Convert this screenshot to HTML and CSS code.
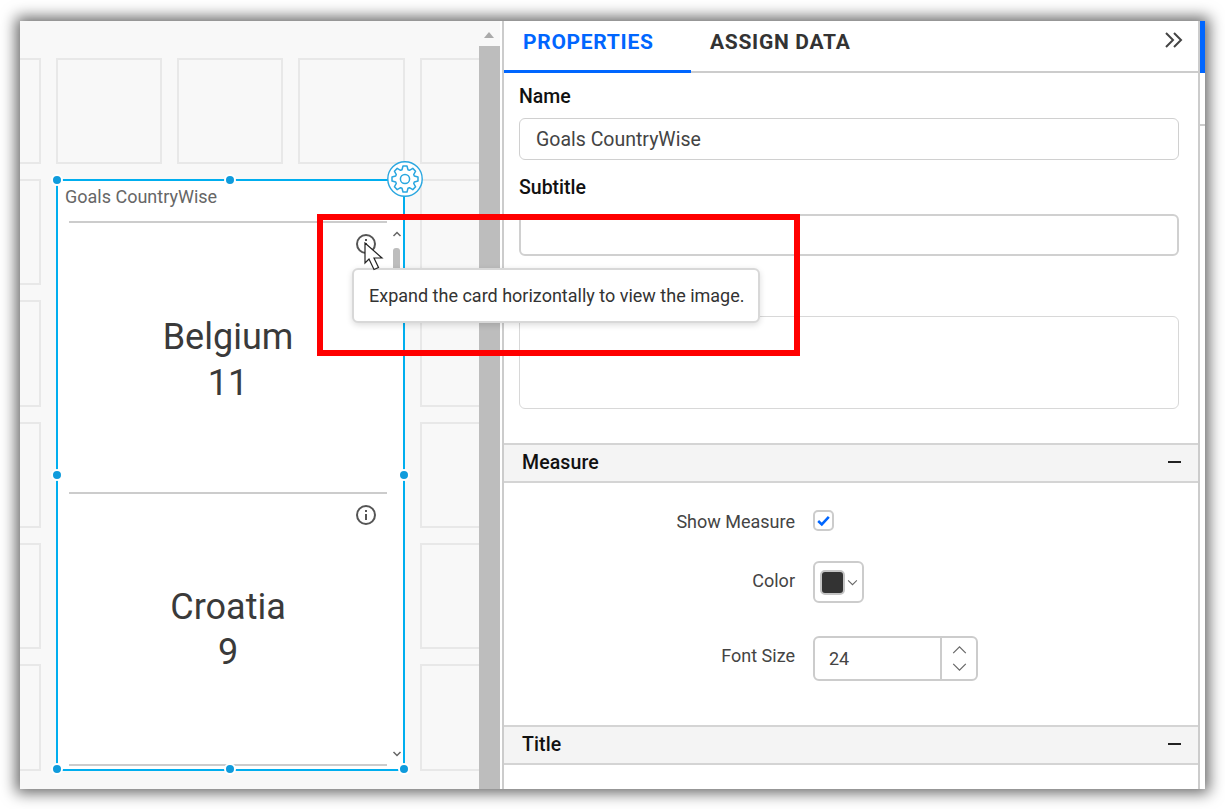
FILE: index.html
```html
<!DOCTYPE html>
<html lang="en">
<head>
<meta charset="utf-8">
<title>Card properties</title>
<link rel="stylesheet" href="styles.css">
</head>
<body>
<div class="window">
  <section class="canvas">
    <div class="tiles">
      <i></i><i></i><i></i><i></i><i></i>
      <i></i><i></i><i></i><i></i><i></i>
      <i></i><i></i><i></i><i></i><i></i>
      <i></i><i></i><i></i><i></i><i></i>
      <i></i><i></i><i></i><i></i><i></i>
      <i></i><i></i><i></i><i></i><i></i>
    </div>
    <div class="widget">
      <div class="widget-title">Goals CountryWise</div>
      <div class="card-list">
        <div class="card">
          <svg class="info" viewBox="0 0 22 22"><circle cx="11" cy="11" r="9" /><path d="M11 10v6M11 6v2" /></svg>
          <div class="card-text">Belgium<br>11</div>
        </div>
        <div class="card second">
          <svg class="info" viewBox="0 0 22 22"><circle cx="11" cy="11" r="9" /><path d="M11 10v6M11 6v2" /></svg>
          <div class="card-text">Croatia<br>9</div>
        </div>
      </div>
      <div class="mini-scroll">
        <svg class="mini-arrow" viewBox="0 0 10 6"><path d="M1.5 5L5 1.5 8.5 5" /></svg>
        <span class="mini-thumb"></span>
        <svg class="mini-arrow bottom" viewBox="0 0 10 6"><path d="M1.5 1L5 4.5 8.5 1" /></svg>
      </div>
      <span class="handle h-tl"></span><span class="handle h-tc"></span>
      <span class="handle h-ml"></span><span class="handle h-mr"></span>
      <span class="handle h-bl"></span><span class="handle h-bc"></span><span class="handle h-br"></span>
      <div class="gear">
        <svg viewBox="0 0 36 36">
          <circle class="gear-ring" cx="18" cy="18" r="17.2" />
          <path class="gear-cog" d="M15 8.7L16 5H20L21 8.7 22.45 9.3 25.78 7.39 28.61 10.22 26.7 13.55 27.3 15 31 16V20L27.3 21 26.7 22.45 28.61 25.78 25.78 28.61 22.45 26.7 21 27.3 20 31H16L15 27.3 13.55 26.7 10.22 28.61 7.39 25.78 9.3 22.45 8.7 21 5 20V16L8.7 15 9.3 13.55 7.39 10.22 10.22 7.39 13.55 9.3Z" />
          <circle class="gear-cog" cx="18" cy="18" r="4.6" />
        </svg>
      </div>
    </div>
  </section>

  <div class="vscroll">
    <svg class="vscroll-arrow" viewBox="0 0 12 8"><path d="M6 1l5 6H1z" /></svg>
    <div class="vscroll-thumb"></div>
  </div>

  <aside class="panel">
    <nav class="tabs">
      <span class="tab active">PROPERTIES</span>
      <span class="tab">ASSIGN DATA</span>
      <svg class="collapse" viewBox="0 0 20 16"><path d="M2 1l7 7-7 7M10 1l7 7-7 7" /></svg>
    </nav>
    <div class="general">
      <label class="field-label">Name</label>
      <div class="input">Goals CountryWise</div>
      <label class="field-label subtitle">Subtitle</label>
      <div class="input thick"></div>
      <div class="textarea"></div>
    </div>
    <div class="section-head"><span>Measure</span><b class="minus"></b></div>
    <div class="rows">
      <div class="row r-show">
        <span class="row-label">Show Measure</span>
        <span class="check"><svg viewBox="0 0 16 16"><path d="M3 8.5l3.4 3.2L13 4.6" /></svg></span>
      </div>
      <div class="row r-color">
        <span class="row-label">Color</span>
        <span class="color-pick"><span class="swatch"></span><svg viewBox="0 0 12 8"><path d="M1 1.5l5 5 5-5" /></svg></span>
      </div>
      <div class="row r-size">
        <span class="row-label">Font Size</span>
        <span class="spinner">
          <span class="spin-value">24</span>
          <span class="spin-btns">
            <svg viewBox="0 0 18 10"><path d="M2 9l7-7 7 7" /></svg>
            <svg viewBox="0 0 18 10"><path d="M2 1l7 7 7-7" /></svg>
          </span>
        </span>
      </div>
    </div>
    <div class="section-head title-head"><span>Title</span><b class="minus"></b></div>
  </aside>

  <div class="edge">
    <div class="edge-thumb"></div>
    <div class="edge-line"></div>
  </div>

  <div class="tooltip">Expand the card horizontally to view the image.</div>
  <div class="callout"></div>
  <svg class="cursor" viewBox="0 0 20 30"><path d="M1 1v20l4-4 5 10.5 4.500-2-4.500-9.500h8z" /></svg>
</div>
</body>
</html>
```

FILE: styles.css
```css
* { box-sizing: border-box; }
html, body { margin: 0; padding: 0; background: #fff; overflow: hidden; }
body { width: 1225px; height: 809px; padding: 21px 20px 20px; font-family: Roboto, "Liberation Sans", sans-serif; color: #333; }

.window {
  position: relative;
  display: flex;
  width: 1185px;
  height: 768px;
  background: #fff;
  box-shadow: 0 0 14px 4px rgba(0, 0, 0, .6);
}

/* canvas */
.canvas { position: relative; flex: 0 0 459px; min-width: 0; background: #f8f8f8; overflow: hidden; }
.tiles {
  display: grid;
  grid-template-columns: 106px 106px 106px 107px 106px;
  grid-template-rows: 106px 106px 107px 106px 106px 107px;
  gap: 15px;
  width: 620px;
  margin: 37px 0 0 -85px;
}
.tiles i { display: block; border: 2px solid #e8e8e8; }

.widget {
  position: absolute;
  left: 36px;
  top: 158px;
  width: 349px;
  height: 592px;
  background: #fff;
  border: 2px solid #00aeef;
}
.widget-title { padding: 5px 0 0 7px; font-size: 18px; line-height: 22px; color: #666; }
.card-list { position: absolute; left: 11px; top: 40px; width: 318px; }
.card { position: relative; height: 271px; border-top: 2px solid #ccc; }
.card.second { height: 274px; border-bottom: 2px solid #ccc; }
.card-text { padding-top: 91px; text-align: center; font-size: 36px; line-height: 46px; color: #3a3a3a; }
.card.second .card-text { line-height: 45px; }
.info { position: absolute; right: 10px; top: 10px; width: 22px; height: 22px; fill: none; stroke: #555; stroke-width: 2; }
.mini-scroll { position: absolute; left: 334px; top: 50px; width: 8px; height: 530px; }
.mini-arrow { display: block; width: 10px; height: 6px; fill: none; stroke: #666; stroke-width: 1.5; }
.mini-arrow.bottom { position: absolute; top: 520px; left: 0; }
.mini-thumb { display: block; width: 7px; height: 60px; margin: 11px 0 0 1px; background: #bdbdbd; border-radius: 3px; }

.handle { position: absolute; width: 12px; height: 12px; background: #0f9bdc; border: 2px solid #fff; border-radius: 50%; }
.h-tl { left: -7px; top: -7px; }
.h-tc { left: 166px; top: -7px; }
.h-ml { left: -7px; top: 288px; }
.h-mr { left: 340px; top: 288px; }
.h-bl { left: -7px; top: 582px; }
.h-bc { left: 166px; top: 582px; }
.h-br { left: 340px; top: 582px; }
.gear { position: absolute; left: 329px; top: -20px; width: 36px; height: 36px; }
.gear svg { display: block; width: 36px; height: 36px; }
.gear-ring { fill: #fff; stroke: #2aa7e0; stroke-width: 1.4; }
.gear-cog { fill: none; stroke: #2aa7e0; stroke-width: 1.5; stroke-linejoin: round; }

/* main scrollbar */
.vscroll { flex: 0 0 23px; background: #f8f8f8; border-right: 2px solid #fff; position: relative; }
.vscroll-arrow { display: block; width: 12px; height: 8px; margin: 10px 0 0 4px; fill: #aaa; }
.vscroll-thumb { position: absolute; left: 0; top: 25px; bottom: 0; width: 21px; background: #bdbdbd; }

/* properties panel */
.panel {
  flex: 0 0 698px;
  display: flex;
  flex-direction: column;
  border-left: 2px solid #ccc;
  border-right: 2px solid #ccc;
  background: #fff;
}
.tabs { position: relative; display: flex; flex: 0 0 52px; min-height: 0; border-bottom: 2px solid #ccc; }
.tab { font-size: 21px; font-weight: 700; letter-spacing: .7px; line-height: 42px; color: #333; padding: 0 19px; }
.tab.active { width: 187px; height: 52px; border-bottom: 3px solid #0066ff; color: #0066ff; }
.collapse { position: absolute; right: 14px; top: 11px; width: 20px; height: 16px; fill: none; stroke: #444; stroke-width: 2; }

.general { flex: 0 0 370px; padding: 0 19px 0 15px; }
.field-label { display: block; padding-top: 14px; font-size: 19.5px; font-weight: 500; line-height: 20px; color: #111; }
.field-label.subtitle { padding-top: 18px; }
.input { height: 42px; margin-top: 11px; padding-left: 16px; border: 1px solid #d0d0d0; border-radius: 6px; font-size: 19.5px; line-height: 42px; color: #444; }
.input.thick { margin-top: 16px; border: 2px solid #d0d0d0; }
.textarea { height: 93px; margin-top: 60px; border: 1px solid #d8d8d8; border-radius: 6px; }

.section-head {
  display: flex;
  flex: 0 0 40px;
  justify-content: space-between;
  align-items: center;
  padding: 0 17px 2px 18px;
  background: #f4f4f4;
  border-top: 2px solid #d4d4d4;
  border-bottom: 2px solid #d4d4d4;
  font-size: 19.5px;
  font-weight: 500;
  letter-spacing: .1px;
  color: #111;
}
.minus { width: 13px; height: 2px; background: #222; }

.rows { flex: 0 0 242px; }
.row { display: flex; align-items: center; }
.row-label { width: 291px; margin-right: 18px; text-align: right; font-size: 18px; color: #444; }
.r-show { height: 21px; margin-top: 27px; }
.r-show .row-label { padding-top: 2px; }
.r-color { height: 42px; margin-top: 30px; }
.r-color .row-label { padding-bottom: 3px; }
.r-size { height: 45px; margin-top: 33px; }
.r-size .row-label { padding-bottom: 7px; }
.check { width: 21px; height: 21px; border: 2px solid #ccc; border-radius: 5px; background: #fff; }
.check svg { display: block; width: 17px; height: 17px; fill: none; stroke: #0066ff; stroke-width: 2.4; }
.color-pick { display: flex; align-items: center; gap: 2px; width: 51px; height: 42px; padding-left: 5px; border: 2px solid #ccc; border-radius: 6px; }
.swatch { width: 25px; height: 25px; background: #333; border: 2px solid #c4c4c4; border-radius: 5px; }
.color-pick svg { width: 11px; height: 7px; fill: none; stroke: #666; stroke-width: 1.2; }
.spinner { display: flex; width: 165px; height: 45px; border: 2px solid #ccc; border-radius: 6px; }
.spin-value { flex: 1; padding: 1px 0 0 14px; font-size: 18px; line-height: 40px; color: #444; }
.spin-btns { display: flex; flex-direction: column; justify-content: center; align-items: center; gap: 9px; width: 36px; border-left: 2px solid #ccc; }
.spin-btns svg { width: 17px; height: 9px; fill: none; stroke: #666; stroke-width: 1.3; }

/* right edge */
.edge { flex: 1; background: #fff; }
.edge-thumb { height: 52px; background: #0066ff; }
.edge-line { height: 2px; margin-top: 51px; background: #ccc; }

/* overlays */
.tooltip {
  position: absolute;
  left: 332px;
  top: 247px;
  width: 408px;
  height: 55px;
  padding-left: 15px;
  background: #fff;
  border: 2px solid #d8d8d8;
  border-radius: 6px;
  box-shadow: 0 2px 6px rgba(0, 0, 0, .14);
  font-size: 18px;
  line-height: 52px;
  color: #333;
}
.callout { position: absolute; left: 297px; top: 193px; width: 483px; height: 142px; border: 6px solid #ff0000; }
.cursor { position: absolute; left: 344px; top: 221px; width: 20px; height: 30px; fill: #fff; stroke: #222; stroke-width: 1.2; }
```
